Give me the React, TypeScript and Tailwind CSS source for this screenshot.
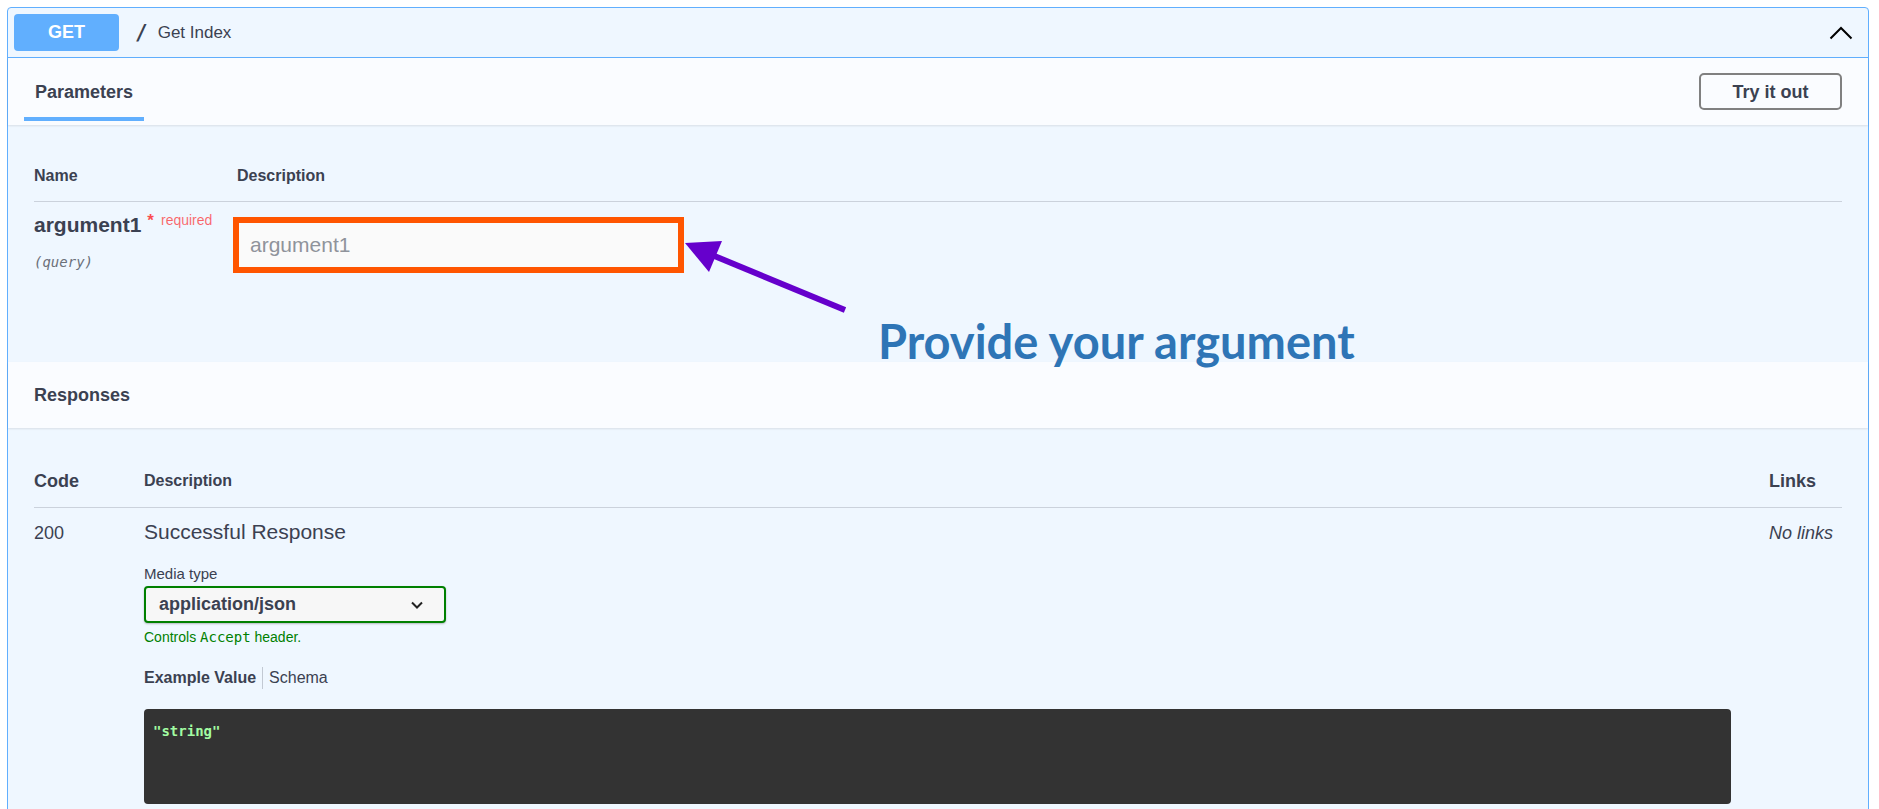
import React from "react";

const sans = "font-['Liberation_Sans',Arial,sans-serif]";
const mono = "font-['DejaVu_Sans_Mono',monospace]";

function ChevronUp() {
  return (
    <svg width="24" height="14" viewBox="0 0 24 14" className="block">
      <path d="M1.5 12.5 L12 2 L22.5 12.5" fill="none" stroke="#000" strokeWidth="2" />
    </svg>
  );
}

function ChevronDown() {
  return (
    <svg width="12" height="8" viewBox="0 0 12 8" className="block">
      <path d="M1 1.5 L6 6.5 L11 1.5" fill="none" stroke="#222" strokeWidth="2" />
    </svg>
  );
}

export default function App() {
  return (
    <div className={`relative w-[1879px] min-h-[809px] bg-white pt-[7px] pl-[7px] pr-[10px] ${sans} text-[#3b4151]`}>
      <div className="border border-[#61affe] rounded-[4px] bg-[#eff7ff] pb-[40px]">
        {/* Summary header */}
        <div className="flex items-center border-b border-[#61affe] p-[6px]">
          <div className="w-[105px] h-[37px] rounded-[4px] bg-[#61affe] text-white font-bold text-[18px] flex items-center justify-center">
            GET
          </div>
          <span className={`ml-[16px] ${mono} font-bold text-[21px] leading-[24px] text-[#3b4151]`}>/</span>
          <span className="ml-[10px] text-[17px] leading-[20px] text-[#3b4151]">Get Index</span>
          <div className="ml-auto mr-[9px]">
            <ChevronUp />
          </div>
        </div>

        {/* Tab header */}
        <div className="flex items-center justify-between h-[67px] pl-[16px] pr-[26px] bg-[#fafcff] shadow-[0_1px_2px_rgba(0,0,0,0.1)]">
          <div className="flex flex-col h-full w-[120px]">
            <div className="pt-[24px] text-center font-bold text-[18px] leading-[21px]">Parameters</div>
            <div className="mt-auto mb-[4px] h-[4px] bg-[#61affe]" />
          </div>
          <button className="w-[143px] h-[37px] pt-[1px] border-2 border-[#808080] rounded-[5px] font-bold text-[18px] text-[#3b4151] bg-transparent">
            Try it out
          </button>
        </div>

        {/* Parameters body */}
        <div className="px-[26px] pb-[89px]">
          <div className="flex pt-[42px] pb-[16px] border-b border-[rgba(59,65,81,0.2)] text-[16px] leading-[18px] font-bold">
            <div className="w-[203px]">Name</div>
            <div>Description</div>
          </div>
          <div className="flex pt-[11px]">
            <div className="w-[203px] flex flex-col">
              <div className="flex items-start">
                <span className="font-bold text-[21px] leading-[24px]">argument1</span>
                <span className="relative top-[-1px] pl-[6px] font-bold text-[17px] leading-[18px] text-[rgba(255,0,0,0.7)]">*</span>
                <span className="relative top-[-2px] pl-[7px] text-[14px] leading-[18px] text-[rgba(255,0,0,0.6)]">required</span>
              </div>
              <div className={`mt-[17px] ${mono} italic text-[14px] leading-[16px] text-[#6b707a]`}>(query)</div>
            </div>
            <div className="mt-[4px] -ml-[4px] w-[451px] h-[56px] border-[6px] border-[#ff5500] bg-[#fafafa] flex items-center pl-[11px]">
              <span className="text-[21px] leading-[24px] text-[#8f939b]">argument1</span>
            </div>
          </div>
        </div>

        {/* Responses header */}
        <div className="h-[66px] flex items-center pl-[26px] bg-[#fafcff] shadow-[0_1px_2px_rgba(0,0,0,0.1)]">
          <span className="font-bold text-[18px] leading-[21px]">Responses</span>
        </div>

        {/* Responses body */}
        <div className="px-[26px]">
          <div className="flex items-center pt-[42px] pb-[15px] border-b border-[rgba(59,65,81,0.2)] leading-[22px] font-bold">
            <div className="w-[110px] text-[18px]">Code</div>
            <div className="flex-1 text-[16px]">Description</div>
            <div className="w-[73px] text-[18px]">Links</div>
          </div>
          <div className="flex items-baseline pt-[12px]">
            <div className="w-[110px] text-[18px] leading-[22px]">200</div>
            <div className="flex-1 flex flex-col pr-[38px]">
              <div className="text-[21px] leading-[24px]">Successful Response</div>
              <div className="mt-[21px] text-[15px] leading-[17px]">Media type</div>
              <div className="mt-[4px] w-[302px] h-[37px] border-2 border-[#008000] rounded-[4px] bg-[#f7f7f7] shadow-[0_1px_2px_rgba(0,0,0,0.25)] flex items-center pl-[13px] pr-[21px]">
                <span className="font-bold text-[18px] leading-[21px] text-[#3b4151]">application/json</span>
                <span className="ml-auto">
                  <ChevronDown />
                </span>
              </div>
              <div className="mt-[6px] text-[14px] leading-[16px] text-[#008000]">
                Controls <span className={`${mono} text-[14px]`}>Accept</span> header.
              </div>
              <div className="mt-[22px] flex items-center text-[16px] leading-[20px]">
                <span className="font-bold pr-[6px]">Example Value</span>
                <span className="h-[22px] border-l border-[rgba(59,65,81,0.25)]" />
                <span className="pl-[6px]">Schema</span>
              </div>
              <div className="mt-[20px] h-[95px] rounded-[4px] bg-[#333333] pl-[9px] pt-[10px]">
                <span className={`${mono} font-bold text-[14px] leading-[16px] text-[#a2fca2]`}>"string"</span>
              </div>
            </div>
            <div className="w-[73px] italic text-[18px] leading-[22px]">No links</div>
          </div>
        </div>
      </div>

      {/* Annotation overlay */}
      <svg className="absolute left-0 top-0 pointer-events-none" width="1879" height="809">
        <line x1="845" y1="310" x2="712" y2="255" stroke="#6600cc" strokeWidth="6" />
        <polygon points="685,243 722,241 709,272" fill="#6600cc" />
      </svg>
      <div className="absolute left-[878px] top-[318px] font-['Lato',sans-serif] font-bold text-[47px] leading-[47px] text-[#2e75b6] whitespace-nowrap">
        Provide your argument
      </div>
    </div>
  );
}
